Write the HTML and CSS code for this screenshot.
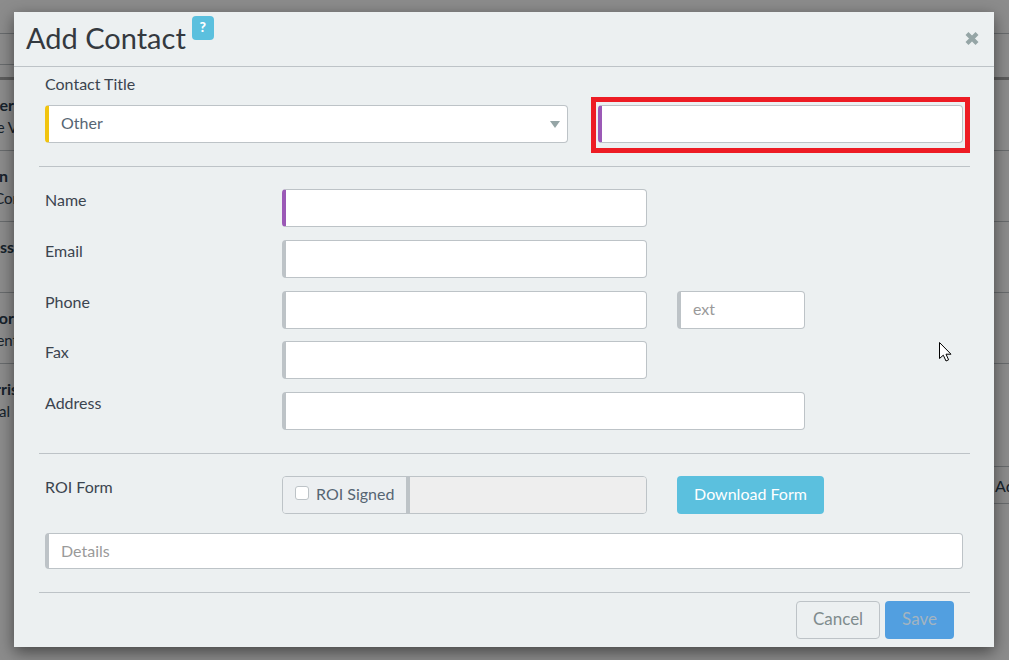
FILE: index.html
```html
<!DOCTYPE html>
<html lang="en">
<head>
<meta charset="utf-8">
<title>Add Contact</title>
<link rel="stylesheet" href="styles.css">
</head>
<body>
<div class="page">
  <div class="page-top"></div>
  <div class="page-head"><div class="head-line"></div></div>
  <div class="list-row"><div class="who"><b>er</b><span>e V</span></div></div>
  <div class="list-row"><div class="who"><b class="short">n</b><span>Cor</span></div></div>
  <div class="list-row"><div class="who"><b>ss</b></div></div>
  <div class="list-row"><div class="who"><b>or</b><span>ent</span></div></div>
  <div class="list-row last"><div class="who"><b class="over">rris</b><span>al I</span></div></div>
  <div class="add-strip"><span>Ad</span></div>
</div>
<div class="backdrop"></div>
<div class="modal">
  <header class="modal-head">
    <h1 class="modal-title">Add Contact</h1>
    <span class="help">?</span>
    <svg class="close" width="14" height="13" viewBox="0 0 14 13"><path d="M2 1.6 L12 11.4 M12 1.6 L2 11.4" fill="none" stroke="#95a5a6" stroke-width="4.2"/></svg>
  </header>
  <form class="modal-body">
    <div class="title-block">
      <label class="label title-label">Contact Title</label>
      <div class="title-row">
        <div class="field select accent-yellow"><span>Other</span><i class="caret"></i></div>
        <div class="highlight"><div class="field accent-purple"></div></div>
      </div>
    </div>
    <hr class="rule">
    <div class="rows">
      <div class="row"><label class="label">Name</label><div class="field w-365 accent-purple"></div></div>
      <div class="row"><label class="label">Email</label><div class="field w-365"></div></div>
      <div class="row"><label class="label">Phone</label><div class="field w-365"></div><div class="field w-128 ph">ext</div></div>
      <div class="row"><label class="label">Fax</label><div class="field w-365"></div></div>
      <div class="row"><label class="label">Address</label><div class="field w-523"></div></div>
    </div>
    <hr class="rule">
    <div class="roi">
      <div class="row"><label class="label">ROI Form</label>
        <div class="group">
          <div class="addon"><i class="check"></i><span>ROI Signed</span></div>
          <div class="group-fill"></div>
        </div>
        <div class="btn btn-info">Download Form</div>
      </div>
      <div class="field details ph">Details</div>
    </div>
    <hr class="rule">
    <div class="actions">
      <div class="btn btn-cancel">Cancel</div>
      <div class="btn btn-save">Save</div>
    </div>
  </form>
</div>
<svg class="cursor" width="13" height="20" viewBox="0 0 13 20"><path d="M0.5 0.5 V16.5 L4.3 13.2 L7 19 L9.6 17.8 L7 12.2 L12 12.2 Z" fill="#fff" stroke="#000" stroke-width="1"/></svg>
</body>
</html>
```
FILE: styles.css
```css
* { box-sizing: border-box; }
html, body { margin: 0; height: 100%; }
body { width: 1009px; height: 660px; overflow: hidden; position: relative; font-family: Lato, "Liberation Sans", sans-serif; font-size: 16px; color: #3b444f; background: #fff; }

.page { height: 660px; overflow: hidden; color: #2c3e50; }
.page-top { height: 34px; border-bottom: 1px solid #bdc3c7; }
.page-head { height: 46px; border-bottom: 3px solid #aaa; }
.head-line { width: 14px; height: 31px; border-bottom: 1px solid #bdc3c7; }
.list-row { height: 71px; border-bottom: 1px solid #bdc3c7; display: flex; }
.list-row.last { border-bottom: 0; }
.who { width: 14px; display: flex; flex-direction: column; align-items: flex-end; white-space: nowrap; padding-top: 13px; line-height: 23px; }
.who b { font-weight: 700; font-size: 16px; }
.who b.short { margin-right: 6px; }
.who b.over { margin-right: -4px; }
.who span { font-size: 15px; margin-right: -4px; }
.add-strip { width: 60px; height: 38px; margin: 31px 0 0 auto; border-top: 1px solid #bdc3c7; border-bottom: 1px solid #bdc3c7; display: flex; justify-content: flex-end; align-items: center; font-size: 16px; }
.add-strip span { width: 14px; white-space: nowrap; }

.backdrop { position: absolute; inset: 0; background: rgba(0, 0, 0, .45); }

.modal { position: absolute; left: 14px; top: 12px; width: 980px; height: 635px; background: #ecf0f1; box-shadow: 0 5px 15px rgba(0, 0, 0, .5); display: flex; flex-direction: column; }
.modal-head { height: 55px; flex: none; border-bottom: 1px solid #bdc3c7; position: relative; padding-left: 12px; display: flex; align-items: flex-start; }
.modal-title { margin: 8px 0 0; font-size: 29px; font-weight: 400; line-height: 36px; color: #34393f; }
.help { margin: 4px 0 0 6px; width: 22px; height: 24px; border-radius: 4px; background: #5bc0de; color: #fff; font-size: 14px; font-weight: 900; text-align: center; line-height: 22px; }
.close { position: absolute; left: 951px; top: 20px; }

.modal-body { padding: 0 24px 0 25px; display: flex; flex-direction: column; }
.rule { margin: 0; border: 0; border-top: 1px solid #bdc3c7; height: 1px; flex: none; }
.label { display: block; width: 237px; flex: none; line-height: 22px; }
.title-block { padding: 6px 7px 23px 6px; }
.title-label { width: auto; margin-bottom: 10px; }
.title-row { display: flex; gap: 30px; }
.title-row > .select { width: 523px; }
.highlight { position: relative; width: 365px; }
.highlight::after { content: ""; position: absolute; inset: -8px -7px -10px; border: 5px solid #ed1c24; pointer-events: none; }

.field { height: 38px; background: #fff; border: 1px solid #bdc3c7; border-left: 4px solid #bdc3c7; border-radius: 4px; flex: none; line-height: 33px; padding-left: 12px; color: #566573; }
.accent-yellow { border-left-color: #f1c40f; }
.accent-purple { border-left-color: #9b59b6; }
.ph { color: #9a9a9a; }
.w-365 { width: 365px; }
.w-128 { width: 128px; margin-left: 30px; }
.w-523 { width: 523px; }
.select { display: flex; align-items: center; justify-content: space-between; padding: 0 7px 0 12px; }
.select span { margin-top: -4px; }
.caret { width: 0; height: 0; border-left: 5.5px solid transparent; border-right: 5.5px solid transparent; border-top: 7px solid #95a5a6; }

.rows { padding: 22.33px 7px 23px 6px; display: flex; flex-direction: column; gap: 12.67px; }
.row { display: flex; align-items: flex-start; }

.roi { padding: 22px 7px 23px 6px; }
.group { width: 365px; height: 38px; flex: none; display: flex; border: 1px solid #bdc3c7; border-radius: 4px; overflow: hidden; background: #ecf0f1; }
.addon { width: 127px; flex: none; background: #eceff1; display: flex; align-items: center; padding: 0 0 3px 12px; gap: 7px; color: #566573; border-right: 4px solid #bdc3c7; }
.group-fill { flex: 1; background: #eeeeee; }
.check { width: 14px; height: 14px; background: #fff; border: 1px solid #bdc3c7; border-radius: 3px; }
.details { margin-top: 19px; height: 36px; line-height: 34px; width: 918px; }

.btn { height: 38px; border-radius: 4px; display: flex; align-items: center; justify-content: center; flex: none; padding-bottom: 2px; }
.btn-info { width: 147px; margin-left: 30px; background: #5bc0de; color: #fff; }
.actions { display: flex; justify-content: flex-end; gap: 5px; padding: 8px 16px 0 0; font-size: 17px; }
.btn-cancel { width: 84px; border: 1px solid #bdc3c7; color: #7f8c8d; }
.btn-save { width: 69px; background: #529fe0; color: #a3b4c0; }

.cursor { position: absolute; left: 939px; top: 342px; }
```
